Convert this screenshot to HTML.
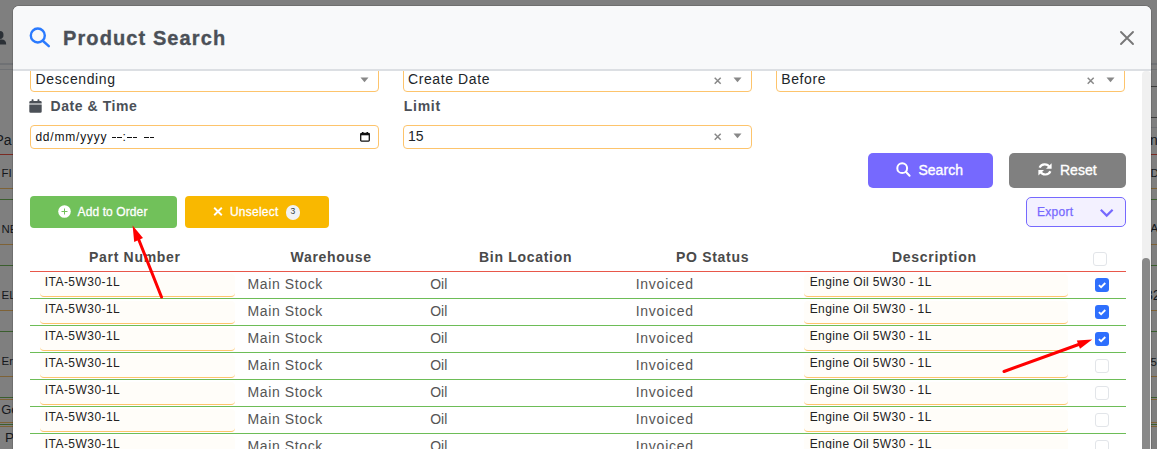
<!DOCTYPE html>
<html><head><meta charset="utf-8"><style>
*{box-sizing:border-box;margin:0;padding:0}
html,body{width:1157px;height:449px;overflow:hidden;background:#7f7f7f;font-family:"Liberation Sans",sans-serif}
body{position:relative}
.a{position:absolute;white-space:pre;line-height:1}
.r{position:absolute}
</style></head><body>
<div class="r" style="left:0;top:63px;width:1157px;height:2px;background:#6f7174"></div>
<div class="r" style="left:0;top:69px;width:1157px;height:1px;background:#6f7174"></div>
<div class="r" style="left:1151px;top:86px;width:6px;height:1px;background:#3c3c3c"></div>
<div class="r" style="left:1151px;top:117px;width:6px;height:1px;background:#3c3c3c"></div>
<div class="r" style="left:1151px;top:127px;width:6px;height:1px;background:#6f7174"></div>
<svg class="r" style="left:0;top:28px" width="8" height="18" viewBox="0 0 8 18"><circle cx="-0.5" cy="7" r="4" fill="#2b3036"/><path d="M-6 16.5Q-6 11.5 -1 11.5H1.5Q6.2 11.5 6.2 16.5Z" fill="#2b3036"/></svg>
<div class="r" style="left:0;top:154px;width:1157px;height:1px;background:#7a2a22"></div>
<div class="r" style="left:0;top:188px;width:1157px;height:1px;background:#7e6236"></div>
<div class="r" style="left:0;top:199px;width:1157px;height:1px;background:#3a5e2e"></div>
<div class="r" style="left:0;top:244px;width:1157px;height:1px;background:#7e6236"></div>
<div class="r" style="left:0;top:265px;width:1157px;height:1px;background:#3a5e2e"></div>
<div class="r" style="left:0;top:310px;width:1157px;height:1px;background:#7e6236"></div>
<div class="r" style="left:0;top:331px;width:1157px;height:1px;background:#3a5e2e"></div>
<div class="r" style="left:0;top:376px;width:1157px;height:1px;background:#7e6236"></div>
<div class="r" style="left:0;top:397px;width:1157px;height:1px;background:#3a5e2e"></div>
<div class="r" style="left:0;top:399px;width:1157px;height:1px;background:#7e6236"></div>
<div class="r" style="left:0;top:422px;width:1157px;height:1px;background:#7e6236"></div>
<div class="r" style="left:0;top:424px;width:1157px;height:1px;background:#3a5e2e"></div>
<div class="r" style="left:0;top:426px;width:1157px;height:1px;background:#7e6236"></div>
<div class="a" style="left:-5.5px;top:132.95px;font-size:14px;color:#15181c;">Pa</div>
<div class="a" style="left:1.5px;top:168.17px;font-size:11.5px;color:#15181c;">FI</div>
<div class="a" style="left:1.5px;top:223.97px;font-size:11.5px;color:#15181c;">NE</div>
<div class="a" style="left:1.5px;top:290.07px;font-size:11.5px;color:#15181c;">EL</div>
<div class="a" style="left:1.5px;top:356.27px;font-size:11.5px;color:#15181c;">Er</div>
<div class="a" style="left:1.2px;top:403.40px;font-size:13px;color:#15181c;">Go</div>
<div class="a" style="left:5px;top:430.57px;font-size:13.5px;color:#15181c;">P</div>
<div class="a" style="left:1150px;top:133.25px;font-size:14px;color:#15181c;">n</div>
<div class="a" style="left:1150.5px;top:168.27px;font-size:11.5px;color:#15181c;">D</div>
<div class="a" style="left:1150.5px;top:222.77px;font-size:11.5px;color:#15181c;">A</div>
<div class="a" style="left:1145px;top:288.15px;font-size:14px;color:#15181c;">32</div>
<div class="a" style="left:1150.5px;top:356.67px;font-size:11.5px;color:#15181c;">5</div>
<div class="r" style="left:12px;top:5px;width:1140px;height:470px;border-radius:7px;background:rgba(0,0,0,.12)"></div>
<div class="r" style="left:13px;top:6px;width:1138px;height:470px;border-radius:6px;background:#fff"></div>
<div class="r" style="left:30px;top:56px;width:349px;height:36px;border:1px solid #fdc46c;border-radius:4px;background:#fff"></div>
<div class="r" style="left:403px;top:56px;width:349px;height:36px;border:1px solid #fdc46c;border-radius:4px;background:#fff"></div>
<div class="r" style="left:776px;top:56px;width:349px;height:36px;border:1px solid #fdc46c;border-radius:4px;background:#fff"></div>
<div class="a" style="left:35.6px;top:71.95px;font-size:14px;color:#212529;letter-spacing:.6px">Descending</div>
<div class="a" style="left:408px;top:71.95px;font-size:14px;color:#212529;letter-spacing:.6px">Create Date</div>
<div class="a" style="left:781.3px;top:71.95px;font-size:14px;color:#212529;letter-spacing:.6px">Before</div>
<svg class="r" style="left:359.5px;top:76.5px" width="9" height="6" viewBox="0 0 9 6"><path d="M0.5 0.5H8.5L4.5 5.2Z" fill="#888"/></svg>
<svg class="r" style="left:713.7px;top:76.7px" width="8" height="8" viewBox="0 0 8 8"><path d="M0.7 0.7L6.7 6.7M6.7 0.7L0.7 6.7" stroke="#888" stroke-width="1.5"/></svg>
<svg class="r" style="left:732.5px;top:76.5px" width="9" height="6" viewBox="0 0 9 6"><path d="M0.5 0.5H8.5L4.5 5.2Z" fill="#888"/></svg>
<svg class="r" style="left:1086.7px;top:76.7px" width="8" height="8" viewBox="0 0 8 8"><path d="M0.7 0.7L6.7 6.7M6.7 0.7L0.7 6.7" stroke="#888" stroke-width="1.5"/></svg>
<svg class="r" style="left:1105.5px;top:76.5px" width="9" height="6" viewBox="0 0 9 6"><path d="M0.5 0.5H8.5L4.5 5.2Z" fill="#888"/></svg>
<svg class="r" style="left:29px;top:99px" width="14" height="14" viewBox="0 0 14 14"><path d="M0.3 3.3Q0.3 2 1.6 2H2.6V0.8Q2.6 0.3 3.1 0.3H4Q4.5 0.3 4.5 0.8V2H8.5V0.8Q8.5 0.3 9 0.3H9.9Q10.4 0.3 10.4 0.8V2H11.4Q12.7 2 12.7 3.3V4.6H0.3ZM0.3 5.6H12.7V12.4Q12.7 13.7 11.4 13.7H1.6Q0.3 13.7 0.3 12.4Z" fill="#4b5057"/></svg>
<div class="a" style="left:50.6px;top:99.05px;font-size:14px;font-weight:bold;color:#4b5057;letter-spacing:.55px">Date &amp; Time</div>
<div class="a" style="left:403.8px;top:99.05px;font-size:14px;font-weight:bold;color:#4b5057;letter-spacing:.7px">Limit</div>
<div class="r" style="left:30px;top:125px;width:349px;height:24px;border:1px solid #fdc46c;border-radius:4px;background:#fff"></div>
<div class="a" style="left:35.4px;top:130.54px;font-size:12px;color:#111;letter-spacing:.8px">dd/mm/yyyy</div>
<div class="r" style="left:111.5px;top:136.6px;width:4.5px;height:1.4px;background:#111"></div>
<div class="r" style="left:117.3px;top:136.6px;width:4.5px;height:1.4px;background:#111"></div>
<div class="r" style="left:127px;top:136.6px;width:4.5px;height:1.4px;background:#111"></div>
<div class="r" style="left:132.9px;top:136.6px;width:4.5px;height:1.4px;background:#111"></div>
<div class="r" style="left:144px;top:136.6px;width:4.5px;height:1.4px;background:#111"></div>
<div class="r" style="left:149.8px;top:136.6px;width:4.5px;height:1.4px;background:#111"></div>
<div class="a" style="left:122.4px;top:130.54px;font-size:12px;color:#111">:</div>
<svg class="r" style="left:360px;top:131px" width="10" height="11" viewBox="0 0 10 11"><path d="M1.5 2.5H8.5Q9.3 2.5 9.3 3.3V9.3Q9.3 10.1 8.5 10.1H1.5Q0.7 10.1 0.7 9.3V3.3Q0.7 2.5 1.5 2.5Z" fill="none" stroke="#111" stroke-width="1.3"/><rect x="0.7" y="2.3" width="8.6" height="2" fill="#111"/><rect x="2" y="1" width="1.5" height="2" fill="#111"/><rect x="6.5" y="1" width="1.5" height="2" fill="#111"/></svg>
<div class="r" style="left:403px;top:125px;width:349px;height:24px;border:1px solid #fdc46c;border-radius:4px;background:#fff"></div>
<div class="a" style="left:408px;top:128.65px;font-size:14px;color:#212529;letter-spacing:0px">15</div>
<svg class="r" style="left:713.7px;top:133.2px" width="8" height="8" viewBox="0 0 8 8"><path d="M0.7 0.7L6.7 6.7M6.7 0.7L0.7 6.7" stroke="#888" stroke-width="1.5"/></svg>
<svg class="r" style="left:732.5px;top:133px" width="9" height="6" viewBox="0 0 9 6"><path d="M0.5 0.5H8.5L4.5 5.2Z" fill="#888"/></svg>
<div class="r" style="left:868px;top:153px;width:125px;height:35px;border-radius:5px;background:#7669fe"></div>
<svg class="r" style="left:896px;top:162px" width="16" height="16" viewBox="0 0 16 16"><circle cx="6.2" cy="6.2" r="4.9" fill="none" stroke="#fff" stroke-width="2"/><line x1="9.8" y1="9.8" x2="13.6" y2="13.8" stroke="#fff" stroke-width="2" stroke-linecap="round"/></svg>
<div class="a" style="left:918.4px;top:163.25px;font-size:14px;color:#fff;letter-spacing:.05px;-webkit-text-stroke:.35px #fff">Search</div>
<div class="r" style="left:1009px;top:153px;width:117px;height:35px;border-radius:5px;background:#808080"></div>
<svg class="r" style="left:1037px;top:162px" width="16" height="15" viewBox="0 0 16 15"><path d="M12.6 5.2A5.6 5.6 0 0 0 2.6 5.6" fill="none" stroke="#fff" stroke-width="2.2"/><path d="M14.6 1.2V6.8H9Z" fill="#fff"/><path d="M3.4 9.6A5.6 5.6 0 0 0 13.4 9.2" fill="none" stroke="#fff" stroke-width="2.2"/><path d="M1.4 13.6V8H7Z" fill="#fff"/></svg>
<div class="a" style="left:1060px;top:163.15px;font-size:14px;color:#fff;letter-spacing:0px;-webkit-text-stroke:.35px #fff">Reset</div>
<div class="r" style="left:1026px;top:197px;width:100px;height:30px;border-radius:5px;background:#f3f1ff;border:1px solid #7669fe"></div>
<div class="a" style="left:1036.9px;top:205.64px;font-size:12px;color:#7669fe;letter-spacing:.3px;-webkit-text-stroke:.25px #7669fe">Export</div>
<svg class="r" style="left:1099px;top:208px" width="16" height="10" viewBox="0 0 16 10"><path d="M1.8 1.8L7.7 7.6L13.6 1.8" fill="none" stroke="#7669fe" stroke-width="2.2"/></svg>
<div class="r" style="left:30px;top:196px;width:147px;height:32px;border-radius:4px;background:#71c15a"></div>
<svg class="r" style="left:58px;top:205px" width="13" height="13" viewBox="0 0 13 13"><circle cx="6.5" cy="6.5" r="6.3" fill="#fff"/><path d="M6.5 3.5V9.5M3.5 6.5H9.5" stroke="#71c15a" stroke-width="1"/></svg>
<div class="a" style="left:77.6px;top:205.54px;font-size:12px;color:#fff;letter-spacing:.1px;-webkit-text-stroke:.3px #fff">Add to Order</div>
<div class="r" style="left:185px;top:196px;width:144px;height:32px;border-radius:4px;background:#f9b800"></div>
<svg class="r" style="left:213px;top:207px" width="10" height="9" viewBox="0 0 10 9"><path d="M1.2 0.8L8.8 8.2M8.8 0.8L1.2 8.2" stroke="#fff" stroke-width="1.9"/></svg>
<div class="a" style="left:229.9px;top:205.54px;font-size:12px;color:#fff;letter-spacing:.25px;-webkit-text-stroke:.3px #fff">Unselect</div>
<div class="r" style="left:286px;top:205px;width:14px;height:15px;border-radius:7px;background:#f1f2f4"></div>
<div class="a" style="left:290.6px;top:206.80px;font-size:8.5px;color:#2f3b3a">3</div>
<div class="a" style="left:89px;top:250.05px;font-size:14px;font-weight:bold;color:#4a4a4a;letter-spacing:.7px">Part Number</div>
<div class="a" style="left:290.5px;top:250.05px;font-size:14px;font-weight:bold;color:#4a4a4a;letter-spacing:.7px">Warehouse</div>
<div class="a" style="left:479px;top:250.05px;font-size:14px;font-weight:bold;color:#4a4a4a;letter-spacing:.7px">Bin Location</div>
<div class="a" style="left:676px;top:250.05px;font-size:14px;font-weight:bold;color:#4a4a4a;letter-spacing:.7px">PO Status</div>
<div class="a" style="left:892px;top:250.05px;font-size:14px;font-weight:bold;color:#4a4a4a;letter-spacing:.7px">Description</div>
<div class="r" style="left:1093px;top:252px;width:14px;height:14px;border-radius:3px;border:1px solid #e2e5e9;background:#fff"></div>
<div class="r" style="left:30px;top:271px;width:1096px;height:1px;background:#e8574a"></div>
<div class="r" style="left:40px;top:274px;width:195px;height:23px;border-radius:4px;background:#fffdf9;border-bottom:1px solid #fdc46c"></div>
<div class="r" style="left:804px;top:274px;width:264px;height:23px;border-radius:4px;background:#fffdf9;border-bottom:1px solid #fdc46c"></div>
<div class="a" style="left:44.8px;top:275.84px;font-size:12px;color:#222;letter-spacing:.45px">ITA-5W30-1L</div>
<div class="a" style="left:247.6px;top:277.45px;font-size:14px;color:#555;letter-spacing:.6px">Main Stock</div>
<div class="a" style="left:430.2px;top:277.45px;font-size:14px;color:#555;letter-spacing:0px">Oil</div>
<div class="a" style="left:635.7px;top:277.45px;font-size:14px;color:#555;letter-spacing:.75px">Invoiced</div>
<div class="a" style="left:809.7px;top:275.84px;font-size:12px;color:#222;letter-spacing:.4px">Engine Oil 5W30 - 1L</div>
<div class="r" style="left:1095px;top:278px;width:14px;height:14px;border-radius:3px;background:#2e6ffd"></div>
<svg class="r" style="left:1095px;top:278px" width="14" height="14" viewBox="0 0 14 14"><path d="M3.9 7.1L6.1 9.2L10.3 5" fill="none" stroke="#fff" stroke-width="1.8"/></svg>
<div class="r" style="left:30px;top:298px;width:1096px;height:1px;background:#6dbd57"></div>
<div class="r" style="left:40px;top:301px;width:195px;height:23px;border-radius:4px;background:#fffdf9;border-bottom:1px solid #fdc46c"></div>
<div class="r" style="left:804px;top:301px;width:264px;height:23px;border-radius:4px;background:#fffdf9;border-bottom:1px solid #fdc46c"></div>
<div class="a" style="left:44.8px;top:302.84px;font-size:12px;color:#222;letter-spacing:.45px">ITA-5W30-1L</div>
<div class="a" style="left:247.6px;top:304.45px;font-size:14px;color:#555;letter-spacing:.6px">Main Stock</div>
<div class="a" style="left:430.2px;top:304.45px;font-size:14px;color:#555;letter-spacing:0px">Oil</div>
<div class="a" style="left:635.7px;top:304.45px;font-size:14px;color:#555;letter-spacing:.75px">Invoiced</div>
<div class="a" style="left:809.7px;top:302.84px;font-size:12px;color:#222;letter-spacing:.4px">Engine Oil 5W30 - 1L</div>
<div class="r" style="left:1095px;top:305px;width:14px;height:14px;border-radius:3px;background:#2e6ffd"></div>
<svg class="r" style="left:1095px;top:305px" width="14" height="14" viewBox="0 0 14 14"><path d="M3.9 7.1L6.1 9.2L10.3 5" fill="none" stroke="#fff" stroke-width="1.8"/></svg>
<div class="r" style="left:30px;top:325px;width:1096px;height:1px;background:#6dbd57"></div>
<div class="r" style="left:40px;top:328px;width:195px;height:23px;border-radius:4px;background:#fffdf9;border-bottom:1px solid #fdc46c"></div>
<div class="r" style="left:804px;top:328px;width:264px;height:23px;border-radius:4px;background:#fffdf9;border-bottom:1px solid #fdc46c"></div>
<div class="a" style="left:44.8px;top:329.84px;font-size:12px;color:#222;letter-spacing:.45px">ITA-5W30-1L</div>
<div class="a" style="left:247.6px;top:331.45px;font-size:14px;color:#555;letter-spacing:.6px">Main Stock</div>
<div class="a" style="left:430.2px;top:331.45px;font-size:14px;color:#555;letter-spacing:0px">Oil</div>
<div class="a" style="left:635.7px;top:331.45px;font-size:14px;color:#555;letter-spacing:.75px">Invoiced</div>
<div class="a" style="left:809.7px;top:329.84px;font-size:12px;color:#222;letter-spacing:.4px">Engine Oil 5W30 - 1L</div>
<div class="r" style="left:1095px;top:332px;width:14px;height:14px;border-radius:3px;background:#2e6ffd"></div>
<svg class="r" style="left:1095px;top:332px" width="14" height="14" viewBox="0 0 14 14"><path d="M3.9 7.1L6.1 9.2L10.3 5" fill="none" stroke="#fff" stroke-width="1.8"/></svg>
<div class="r" style="left:30px;top:352px;width:1096px;height:1px;background:#6dbd57"></div>
<div class="r" style="left:40px;top:355px;width:195px;height:23px;border-radius:4px;background:#fffdf9;border-bottom:1px solid #fdc46c"></div>
<div class="r" style="left:804px;top:355px;width:264px;height:23px;border-radius:4px;background:#fffdf9;border-bottom:1px solid #fdc46c"></div>
<div class="a" style="left:44.8px;top:356.84px;font-size:12px;color:#222;letter-spacing:.45px">ITA-5W30-1L</div>
<div class="a" style="left:247.6px;top:358.45px;font-size:14px;color:#555;letter-spacing:.6px">Main Stock</div>
<div class="a" style="left:430.2px;top:358.45px;font-size:14px;color:#555;letter-spacing:0px">Oil</div>
<div class="a" style="left:635.7px;top:358.45px;font-size:14px;color:#555;letter-spacing:.75px">Invoiced</div>
<div class="a" style="left:809.7px;top:356.84px;font-size:12px;color:#222;letter-spacing:.4px">Engine Oil 5W30 - 1L</div>
<div class="r" style="left:1095px;top:359px;width:14px;height:14px;border-radius:3px;border:1px solid #e2e5e9;background:#fff"></div>
<div class="r" style="left:30px;top:379px;width:1096px;height:1px;background:#6dbd57"></div>
<div class="r" style="left:40px;top:382px;width:195px;height:23px;border-radius:4px;background:#fffdf9;border-bottom:1px solid #fdc46c"></div>
<div class="r" style="left:804px;top:382px;width:264px;height:23px;border-radius:4px;background:#fffdf9;border-bottom:1px solid #fdc46c"></div>
<div class="a" style="left:44.8px;top:383.84px;font-size:12px;color:#222;letter-spacing:.45px">ITA-5W30-1L</div>
<div class="a" style="left:247.6px;top:385.45px;font-size:14px;color:#555;letter-spacing:.6px">Main Stock</div>
<div class="a" style="left:430.2px;top:385.45px;font-size:14px;color:#555;letter-spacing:0px">Oil</div>
<div class="a" style="left:635.7px;top:385.45px;font-size:14px;color:#555;letter-spacing:.75px">Invoiced</div>
<div class="a" style="left:809.7px;top:383.84px;font-size:12px;color:#222;letter-spacing:.4px">Engine Oil 5W30 - 1L</div>
<div class="r" style="left:1095px;top:386px;width:14px;height:14px;border-radius:3px;border:1px solid #e2e5e9;background:#fff"></div>
<div class="r" style="left:30px;top:406px;width:1096px;height:1px;background:#6dbd57"></div>
<div class="r" style="left:40px;top:409px;width:195px;height:23px;border-radius:4px;background:#fffdf9;border-bottom:1px solid #fdc46c"></div>
<div class="r" style="left:804px;top:409px;width:264px;height:23px;border-radius:4px;background:#fffdf9;border-bottom:1px solid #fdc46c"></div>
<div class="a" style="left:44.8px;top:410.84px;font-size:12px;color:#222;letter-spacing:.45px">ITA-5W30-1L</div>
<div class="a" style="left:247.6px;top:412.45px;font-size:14px;color:#555;letter-spacing:.6px">Main Stock</div>
<div class="a" style="left:430.2px;top:412.45px;font-size:14px;color:#555;letter-spacing:0px">Oil</div>
<div class="a" style="left:635.7px;top:412.45px;font-size:14px;color:#555;letter-spacing:.75px">Invoiced</div>
<div class="a" style="left:809.7px;top:410.84px;font-size:12px;color:#222;letter-spacing:.4px">Engine Oil 5W30 - 1L</div>
<div class="r" style="left:1095px;top:413px;width:14px;height:14px;border-radius:3px;border:1px solid #e2e5e9;background:#fff"></div>
<div class="r" style="left:30px;top:433px;width:1096px;height:1px;background:#6dbd57"></div>
<div class="r" style="left:40px;top:436px;width:195px;height:23px;border-radius:4px;background:#fffdf9;border-bottom:1px solid #fdc46c"></div>
<div class="r" style="left:804px;top:436px;width:264px;height:23px;border-radius:4px;background:#fffdf9;border-bottom:1px solid #fdc46c"></div>
<div class="a" style="left:44.8px;top:437.84px;font-size:12px;color:#222;letter-spacing:.45px">ITA-5W30-1L</div>
<div class="a" style="left:247.6px;top:439.45px;font-size:14px;color:#555;letter-spacing:.6px">Main Stock</div>
<div class="a" style="left:430.2px;top:439.45px;font-size:14px;color:#555;letter-spacing:0px">Oil</div>
<div class="a" style="left:635.7px;top:439.45px;font-size:14px;color:#555;letter-spacing:.75px">Invoiced</div>
<div class="a" style="left:809.7px;top:437.84px;font-size:12px;color:#222;letter-spacing:.4px">Engine Oil 5W30 - 1L</div>
<div class="r" style="left:1095px;top:440px;width:14px;height:14px;border-radius:3px;border:1px solid #e2e5e9;background:#fff"></div>
<div class="r" style="left:30px;top:460px;width:1096px;height:1px;background:#6dbd57"></div>
<svg class="r" style="left:0;top:0" width="1157" height="449" viewBox="0 0 1157 449"><line x1="138.5" y1="239" x2="161.5" y2="297" stroke="#ff0000" stroke-width="3" stroke-linecap="round"/><path d="M132.6 225.6L134.2 242L143 238Z" fill="#ff0000"/><line x1="1004" y1="371.5" x2="1080" y2="344" stroke="#ff0000" stroke-width="3" stroke-linecap="round"/><path d="M1092.2 339.6L1076.8 340.4L1080 348.8Z" fill="#ff0000"/></svg>
<div class="r" style="left:1142px;top:71px;width:9px;height:380px;border-radius:4px 4px 0 0;background:#f0f0f0"></div>
<div class="r" style="left:1142px;top:258px;width:8px;height:200px;border-radius:4px 4px 0 0;background:#898989"></div>
<div class="r" style="left:13px;top:6px;width:1138px;height:65px;border-radius:6px 6px 0 0;background:#f8f9fa;border-bottom:2px solid #dcdfe3"></div>
<svg class="r" style="left:28px;top:26px" width="24" height="24" viewBox="0 0 24 24"><circle cx="9.8" cy="9.5" r="7" fill="none" stroke="#2a7afe" stroke-width="2.4"/><line x1="15" y1="15" x2="20.8" y2="20.2" stroke="#2a7afe" stroke-width="2.4" stroke-linecap="round"/></svg>
<div class="a" style="left:63px;top:28.47px;font-size:20px;font-weight:bold;color:#4b5057;letter-spacing:1.1px;-webkit-text-stroke:.35px #4b5057">Product Search</div>
<svg class="r" style="left:1119px;top:30px" width="16" height="16" viewBox="0 0 16 16"><path d="M2 2L14 14M14 2L2 14" stroke="#777" stroke-width="1.9" stroke-linecap="round"/></svg>
</body></html>
